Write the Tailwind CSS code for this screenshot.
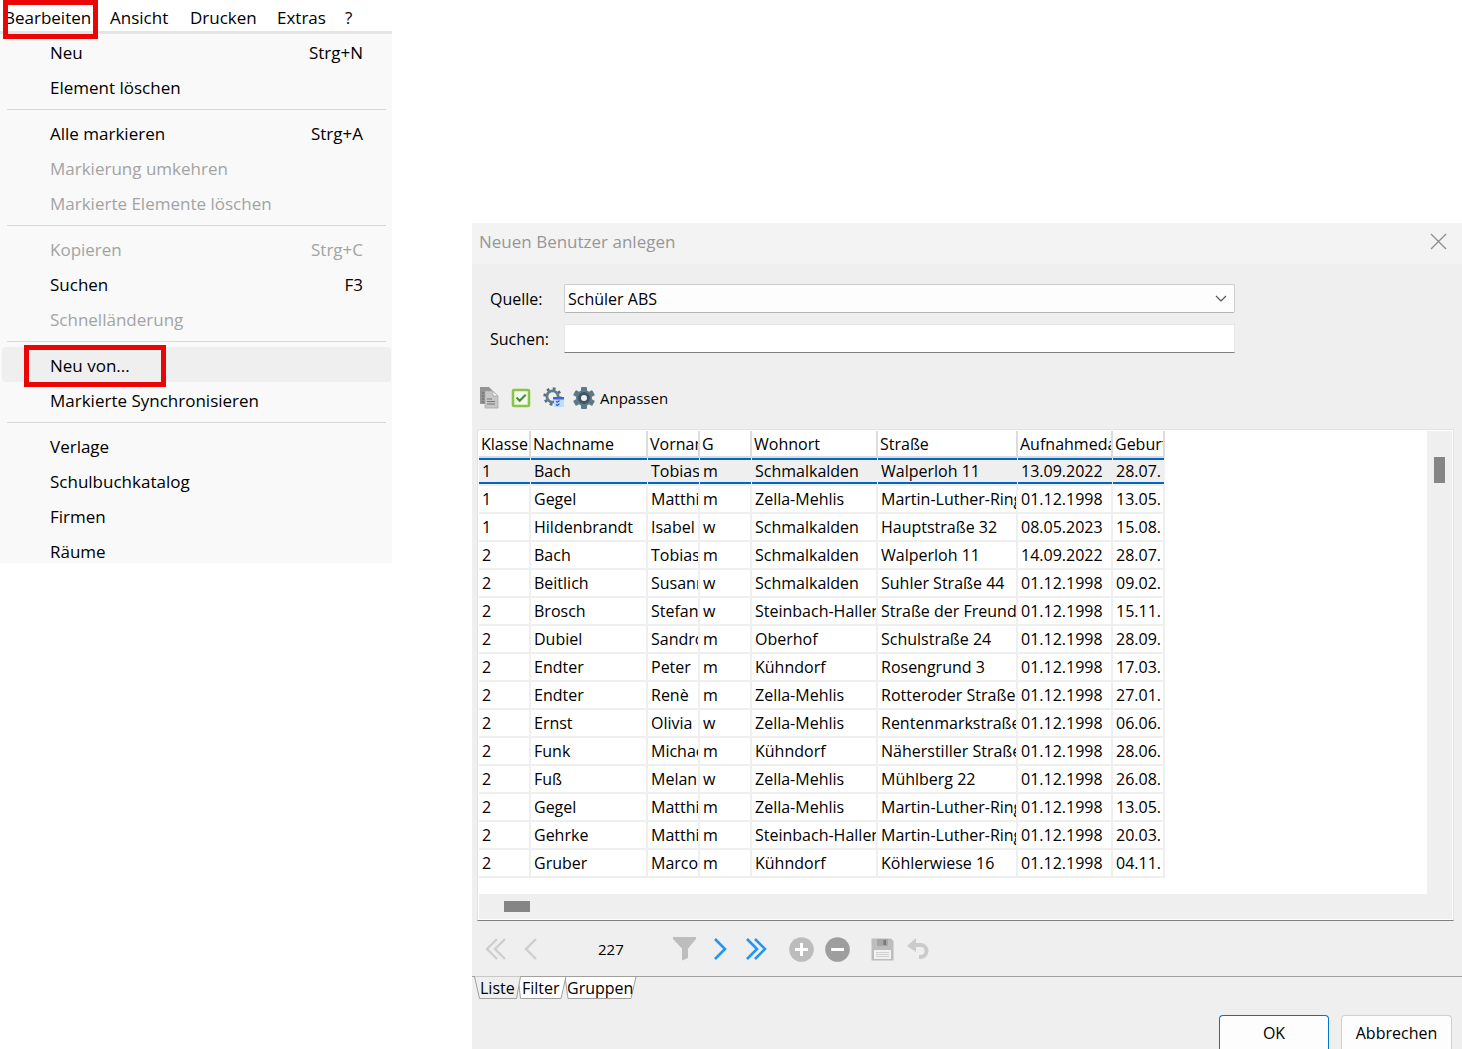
<!DOCTYPE html>
<html lang="de">
<head>
<meta charset="utf-8">
<title>Neuen Benutzer anlegen</title>
<script src="https://cdn.jsdelivr.net/npm/@tailwindcss/browser@4"></script>
</head>
<body class="flex min-h-screen items-start gap-20 overflow-hidden bg-white font-['Open_Sans','Noto_Sans',sans-serif] text-black">

<!-- Menu -->
<div class="w-98 shrink-0 text-[17px] leading-6">
  <nav class="flex h-[34px] items-start border-b-[3px] border-[#e5e5e5]">
    <div class="relative w-[99px] pt-[6px] pl-1">
      <button class="block">Bearbeiten</button>
      <span class="absolute top-0 left-[3px] h-[39px] w-[95px] border-[5px] border-[#ea0606]"></span>
    </div>
    <button class="w-20 pt-[6px] pl-[11px] text-left">Ansicht</button>
    <button class="w-[87px] pt-[6px] pl-[11px] text-left">Drucken</button>
    <button class="w-[68px] pt-[6px] pl-[11px] text-left">Extras</button>
    <button class="pt-[6px] pl-[11px] text-left">?</button>
  </nav>
  <div class="bg-[#f9f9f9]">
    <button class="flex h-[35px] w-full items-center justify-between pt-[2px] pr-[29px] pl-[50px]"><span>Neu</span><span>Strg+N</span></button>
    <button class="flex h-[35px] w-full items-center pt-[2px] pl-[50px]">Element löschen</button>
    <hr class="my-[5px] mr-[6px] ml-[7px] border-[#d7d7d7]">
    <button class="flex h-[35px] w-full items-center justify-between pt-[2px] pr-[29px] pl-[50px]"><span>Alle markieren</span><span>Strg+A</span></button>
    <button class="flex h-[35px] w-full items-center pt-[2px] pl-[50px] text-[#a3a3a3]">Markierung umkehren</button>
    <button class="flex h-[35px] w-full items-center pt-[2px] pl-[50px] text-[#a3a3a3]">Markierte Elemente löschen</button>
    <hr class="my-[5px] mr-[6px] ml-[7px] border-[#d7d7d7]">
    <button class="flex h-[35px] w-full items-center justify-between pt-[2px] pr-[29px] pl-[50px] text-[#a3a3a3]"><span>Kopieren</span><span>Strg+C</span></button>
    <button class="flex h-[35px] w-full items-center justify-between pt-[2px] pr-[29px] pl-[50px]"><span>Suchen</span><span>F3</span></button>
    <button class="flex h-[35px] w-full items-center pt-[2px] pl-[50px] text-[#a3a3a3]">Schnelländerung</button>
    <hr class="my-[5px] mr-[6px] ml-[7px] border-[#d7d7d7]">
    <div class="relative px-[2px] pr-px">
      <button class="flex h-[35px] w-full items-center rounded bg-[#efefef] pt-[2px] pl-12">Neu von...</button>
      <span class="absolute -top-[2px] left-6 h-[42px] w-[142px] border-[5px] border-[#ea0606]"></span>
    </div>
    <button class="flex h-[35px] w-full items-center pt-[2px] pl-[50px]">Markierte Synchronisieren</button>
    <hr class="my-[5px] mr-[6px] ml-[7px] border-[#d7d7d7]">
    <button class="flex h-[35px] w-full items-center pt-[2px] pl-[50px]">Verlage</button>
    <button class="flex h-[35px] w-full items-center pt-[2px] pl-[50px]">Schulbuchkatalog</button>
    <button class="flex h-[35px] w-full items-center pt-[2px] pl-[50px]">Firmen</button>
    <button class="flex h-[30px] w-full items-start pt-[7px] pl-[50px]">Räume</button>
  </div>
</div>

<!-- Dialog -->
<section class="mt-[223px] min-w-0 flex-1 bg-[#efefef] text-base leading-6">
  <header class="flex h-[41px] items-center justify-between bg-[#f3f3f3] pr-[15px] pb-1 pl-[7px]">
    <h1 class="text-[17px] text-[#979797]">Neuen Benutzer anlegen</h1>
    <button aria-label="Schließen"><svg class="block" width="17" height="17" viewBox="0 0 17 17" fill="none" stroke="#8c8c8c" stroke-width="1.3"><path d="M1 1l15 15M16 1L1 16"/></svg></button>
  </header>

  <form class="mr-[227px] ml-[18px] pt-5">
    <div class="flex h-[29px] items-center">
      <label for="quelle" class="w-[74px]">Quelle:</label>
      <div class="relative h-full flex-1">
        <select id="quelle" class="block h-full w-full appearance-none rounded-xs border border-[#cdcdcd] border-b-[#b5b5b5] bg-[#fdfdfd] pl-[3px]"><option>Schüler ABS</option></select>
        <svg class="pointer-events-none absolute top-[11px] right-2" width="12" height="8" viewBox="0 0 12 8" fill="none" stroke="#555" stroke-width="1.2"><path d="M1 1l5 5 5-5"/></svg>
      </div>
    </div>
    <div class="mt-[11px] flex h-[29px] items-center">
      <label for="suchen" class="w-[74px]">Suchen:</label>
      <input id="suchen" type="text" class="h-full min-w-0 flex-1 border border-[#e6e6e6] border-b-[#808080] bg-white px-1">
    </div>
  </form>

  <div class="flex h-[76px] items-center pt-[13px] pl-[7px] text-[15px]">
    <button aria-label="Kopieren" class="mr-3"><svg class="block" width="20" height="22" viewBox="0 0 20 22">
      <path d="M1 0h9l3 3v14H1z" fill="#949494"/><path d="M3 6h4M3 9h4M3 12h4M3 15h4" stroke="#666"/>
      <path d="M6 4h8l5 5v12H6z" fill="#c6c6c6" stroke="#aaa" stroke-width=".8"/><path d="M14 4v5h5z" fill="#f0f0f0" stroke="#999" stroke-width=".6"/><path d="M8 12h5M8 14.500h8M8 17h8" stroke="#767676" stroke-width="1.200"/></svg></button>
    <button aria-label="Auswählen" class="mr-3"><svg class="block" width="20" height="20" viewBox="0 0 20 20"><rect x="2" y="2" width="16" height="16" rx="1" fill="#f3faeb" stroke="#8bc34a" stroke-width="2.600"/><path d="M5.500 9.500l3.200 3.300 6-6" fill="none" stroke="#3f8a35" stroke-width="2"/></svg></button>
    <button aria-label="Optionen" class="mr-2"><svg class="block" width="22" height="22" viewBox="0 0 22 22">
      <circle cx="9.500" cy="9.500" r="7.700" fill="none" stroke="#546e7a" stroke-width="3" stroke-dasharray="2.700 3.348"/><circle cx="9.500" cy="9.500" r="5.600" fill="none" stroke="#607d8b" stroke-width="2.800"/>
      <path d="M11 10h10v10H11z" fill="#bbdefb"/><path d="M10 10h11v2.500H10z" fill="#4060e8"/><path d="M13 14.200l1.200 1 2.300-1.700M13 17.500l1.200 1 2.300-1.700" fill="none" stroke="#304ed8" stroke-width="1.100"/></svg></button>
    <button class="flex items-center gap-[5px]"><svg class="block" width="22" height="22" viewBox="0 0 22 22">
      <g fill="#5c7a88"><rect x="8" y="0" width="6" height="22" rx="1"/><rect x="8" y="0" width="6" height="22" rx="1" transform="rotate(60 11 11)"/><rect x="8" y="0" width="6" height="22" rx="1" transform="rotate(120 11 11)"/><circle cx="11" cy="11" r="8"/></g>
      <circle cx="11" cy="11" r="4.500" fill="#efefef" stroke="#40555f" stroke-width="3" /></svg><span>Anpassen</span></button>
  </div>

  <!-- Result list -->
  <div class="mr-2 ml-[5px] border border-[#e2e2e2] border-b-[#808080] bg-white p-px">
    <div class="flex h-[463px]">
      <div class="min-w-0 flex-1 overflow-hidden">
        <table class="w-[686px] table-fixed border-separate border-spacing-0 text-left whitespace-nowrap">
          <colgroup><col class="w-[52px]"><col class="w-[117px]"><col class="w-[52px]"><col class="w-[52px]"><col class="w-[126px]"><col class="w-[140px]"><col class="w-[95px]"><col class="w-[52px]"></colgroup>
          <thead><tr class="h-[27px] *:overflow-hidden *:border-r-2 *:border-b-2 *:border-[#dcdcdc] *:py-0 *:pr-0 *:pl-[2px] *:font-normal">
            <th>Klasse</th><th>Nachname</th><th>Vorname</th><th>G</th><th>Wohnort</th><th>Straße</th><th>Aufnahmedatum</th><th>Geburtsdatum</th></tr></thead>
          <tbody id="rows"></tbody>
        </table>
      </div>
      <div class="w-[25px] bg-[#efefef] pt-[26px] pl-[7px]"><div class="h-[26px] w-[11px] bg-[#858585]"></div></div>
    </div>
    <div class="h-[25px] bg-[#efefef] pt-[7px] pl-[25px]"><div class="h-[11px] w-[26px] bg-[#858585]"></div></div>
  </div>

  <!-- Record navigation -->
  <div class="flex h-[55px] items-center pt-px pl-[13px] text-[15px]">
    <button aria-label="Erster" class="mr-4"><svg class="block" width="22" height="24" viewBox="0 0 22 24" fill="none" stroke="#cecece" stroke-width="2.400"><path d="M12 2L2 12l10 10M20 2L10 12l10 10"/></svg></button>
    <button aria-label="Zurück" class="w-[75px]"><svg class="block" width="16" height="24" viewBox="0 0 16 24" fill="none" stroke="#cecece" stroke-width="2.400"><path d="M13 2L3 12l10 10"/></svg></button>
    <span class="w-[75px]">227</span>
    <button aria-label="Filtern" class="mr-4"><svg class="block" width="24" height="24" viewBox="0 0 24 24"><path d="M0 0h23v2l-8 9.500V21l-6 2.500V11.500L0 2z" fill="#bdbdbd"/></svg></button>
    <button aria-label="Weiter" class="mr-[18px]"><svg class="block" width="14" height="24" viewBox="0 0 14 24" fill="none" stroke="#2196f3" stroke-width="2.600"><path d="M2 2l10 10L2 22"/></svg></button>
    <button aria-label="Letzter" class="mr-[22px]"><svg class="block" width="22" height="24" viewBox="0 0 22 24" fill="none" stroke="#2196f3" stroke-width="2.600"><path d="M2 2l10 10L2 22M10 2l10 10-10 10"/></svg></button>
    <button aria-label="Hinzufügen" class="mr-[11px]"><svg class="block" width="25" height="25" viewBox="0 0 25 25"><circle cx="12.500" cy="12.500" r="12.300" fill="#bcbcbc"/><path d="M12.500 6v13M6 12.500h13" stroke="#fff" stroke-width="3"/></svg></button>
    <button aria-label="Entfernen" class="mr-[21px]"><svg class="block" width="25" height="25" viewBox="0 0 25 25"><circle cx="12.500" cy="12.500" r="12.300" fill="#9e9e9e"/><path d="M6 12.500h13" stroke="#fff" stroke-width="3"/></svg></button>
    <button aria-label="Speichern" class="mr-[13px]"><svg class="block" width="23" height="23" viewBox="0 0 23 23"><path d="M1 .500h19l2.500 2.500v19.500H.500V.500z" fill="#bdbdbd"/><path d="M6 1h11v7H6z" fill="#a6a6a6"/><path d="M12.500 2h2.500v5h-2.500z" fill="#777"/><path d="M3 12h17v9H3z" fill="#f2f2f2"/><path d="M5 14.500h13M5 16.500h13M5 18.500h13" stroke="#d0d0d0"/></svg></button>
    <button aria-label="Rückgängig"><svg class="block" width="22" height="22" viewBox="0 0 22 22"><path d="M0 8l9-8v14z" fill="#cbcbcb"/><path d="M7 7h6.500a6 6 0 0 1 0 12H12" fill="none" stroke="#cbcbcb" stroke-width="4"/></svg></button>
  </div>

  <div class="relative flex h-[39px] items-start border-t border-[#a0a0a0] leading-[22px]">
    <svg class="absolute -top-px left-0" width="170" height="24" viewBox="0 0 170 24" stroke="#a0a0a0" stroke-width="1"><path d="M93 .500l3 22h63l5-22z" fill="#fff"/><path d="M46 .500l2.500 22H89l5-22z" fill="#fff"/><path d="M2.500.500l5 22h37l4-22z" fill="#efefef" stroke="none"/><path d="M2.500.500l5 22h37l4-22" fill="none"/></svg>
    <button class="relative w-[50px] pl-2 text-left">Liste</button>
    <button class="relative w-[45px] text-left">Filter</button>
    <button class="relative text-left">Gruppen</button>
  </div>

  <footer class="flex justify-end gap-3 pr-[10px]">
    <button class="h-[34px] w-[110px] rounded-t border border-b-0 border-[#0073cf] bg-[#fdfdfd]">OK</button>
    <button class="h-[34px] w-[111px] rounded-t border border-b-0 border-[#d0d0d0] bg-[#fdfdfd]">Abbrechen</button>
  </footer>
</section>

<script>
const rows = [
  ['1','Bach','Tobias','m','Schmalkalden','Walperloh 11','13.09.2022','28.07.'],
  ['1','Gegel','Matthias','m','Zella-Mehlis','Martin-Luther-Ring','01.12.1998','13.05.'],
  ['1','Hildenbrandt','Isabel','w','Schmalkalden','Hauptstraße 32','08.05.2023','15.08.'],
  ['2','Bach','Tobias','m','Schmalkalden','Walperloh 11','14.09.2022','28.07.'],
  ['2','Beitlich','Susanne','w','Schmalkalden','Suhler Straße 44','01.12.1998','09.02.'],
  ['2','Brosch','Stefanie','w','Steinbach-Hallenberg','Straße der Freundschaft','01.12.1998','15.11.'],
  ['2','Dubiel','Sandro','m','Oberhof','Schulstraße 24','01.12.1998','28.09.'],
  ['2','Endter','Peter','m','Kühndorf','Rosengrund 3','01.12.1998','17.03.'],
  ['2','Endter','Renè','m','Zella-Mehlis','Rotteroder Straße','01.12.1998','27.01.'],
  ['2','Ernst','Olivia','w','Zella-Mehlis','Rentenmarkstraße','01.12.1998','06.06.'],
  ['2','Funk','Michael','m','Kühndorf','Näherstiller Straße','01.12.1998','28.06.'],
  ['2','Fuß','Melanie','w','Zella-Mehlis','Mühlberg 22','01.12.1998','26.08.'],
  ['2','Gegel','Matthias','m','Zella-Mehlis','Martin-Luther-Ring','01.12.1998','13.05.'],
  ['2','Gehrke','Matthias','m','Steinbach-Hallenberg','Martin-Luther-Ring','01.12.1998','20.03.'],
  ['2','Gruber','Marco','m','Kühndorf','Köhlerwiese 16','01.12.1998','04.11.']
];
const plain = 'h-[26px] overflow-hidden pl-[3px] leading-[26px]';
const selected = 'h-[26px] overflow-hidden border-y-2 border-[#0066cc] bg-[#efefef] pl-[3px] leading-[22px]';
document.getElementById('rows').innerHTML = rows.map((r, i) =>
  '<tr>' + r.map(c => `<td class="border-b-2 ${i ? 'border-r-2' : 'border-r'} border-[#efefef] p-0"><div class="${i ? plain : selected}">${c}</div></td>`).join('') + '</tr>').join('');
</script>
</body>
</html>
